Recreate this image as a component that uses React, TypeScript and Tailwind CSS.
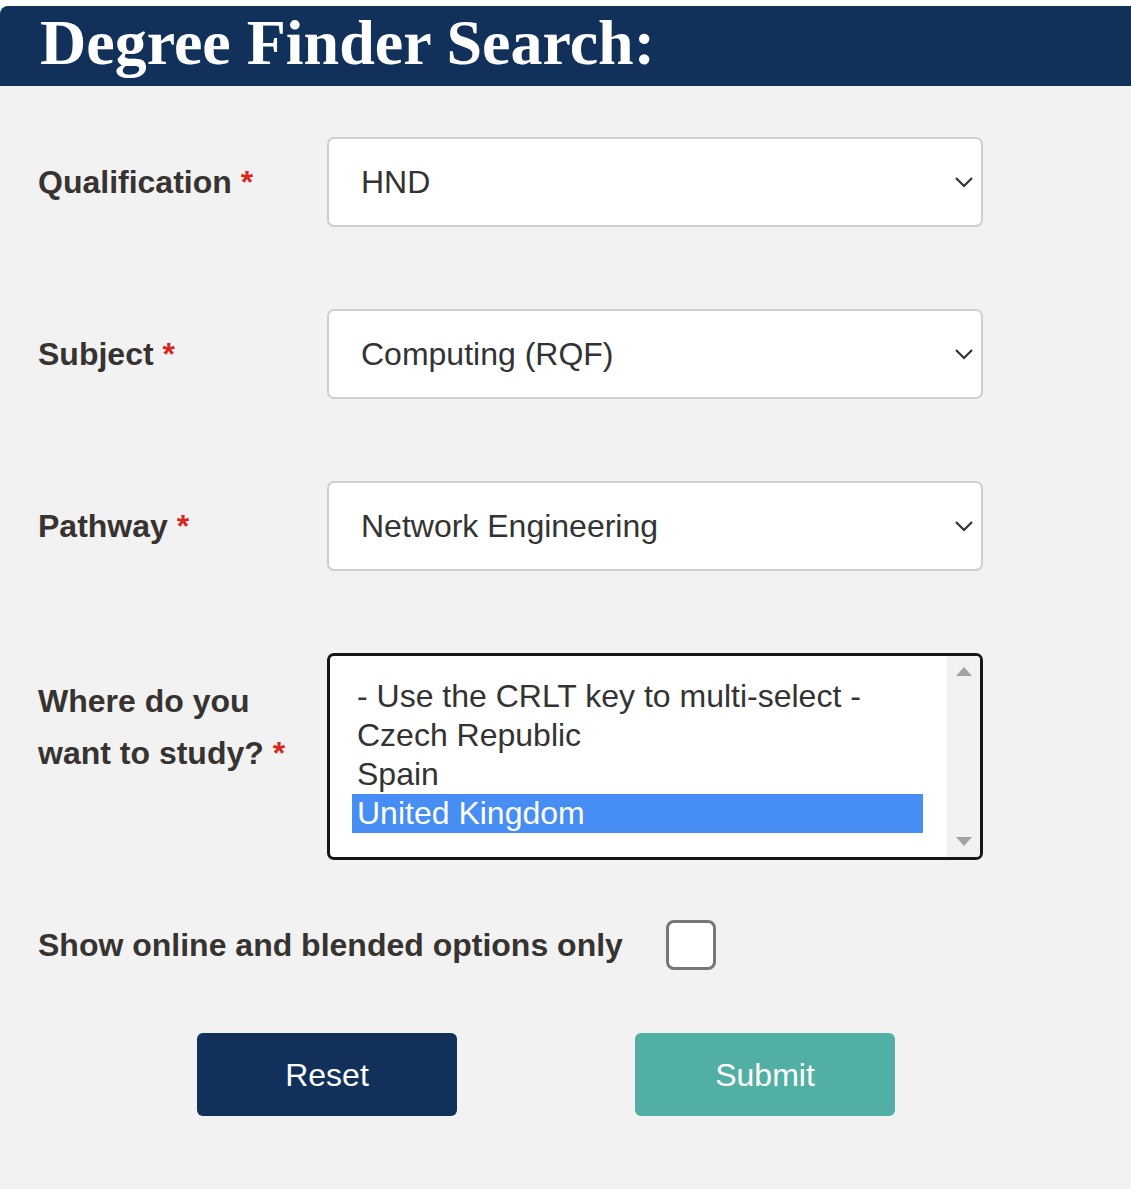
import React from "react";

const sans = { fontFamily: '"Liberation Sans", Arial, sans-serif' };

function Label({ text }: { text: React.ReactNode }) {
  return (
    <div className="w-[289px] shrink-0 text-[32px] font-bold leading-[52px] text-[#363330]">
      {text} <span className="text-[#d8281e]">*</span>
    </div>
  );
}

function Chevron() {
  return (
    <svg width="20" height="12" viewBox="0 0 20 12" className="absolute right-[7px] top-1/2 -translate-y-1/2">
      <path d="M2 2 L10 10 L18 2" fill="none" stroke="#333" strokeWidth="2.2" />
    </svg>
  );
}

function SelectBox({ value }: { value: string }) {
  return (
    <div className="relative flex h-[90px] w-[656px] items-center rounded-[7px] border-2 border-[#cfcfcf] bg-white pl-[32px] text-[32px] text-[#333]">
      {value}
      <Chevron />
    </div>
  );
}

const countries = ["- Use the CRLT key to multi-select -", "Czech Republic", "Spain", "United Kingdom"];

function ListBox() {
  return (
    <div className="relative h-[207px] w-[656px] overflow-hidden rounded-[7px] border-[3px] border-[#161616] bg-white">
      <div className="pl-[22px] pr-[57px] pt-[21px] text-[32px] leading-[39px] text-[#333]">
        {countries.map((c) => (
          <div
            key={c}
            className={c === "United Kingdom" ? "bg-[#468df4] pl-[5px] text-white" : "pl-[5px]"}
          >
            {c}
          </div>
        ))}
      </div>
      <div className="absolute bottom-0 right-0 top-0 flex w-[33px] flex-col items-center justify-between bg-[#f1f1f1] py-[10px]">
        <svg width="16" height="10" viewBox="0 0 16 10">
          <path d="M0 10 L8 1 L16 10 Z" fill="#a3a3a3" />
        </svg>
        <svg width="16" height="10" viewBox="0 0 16 10">
          <path d="M0 0 L8 9 L16 0 Z" fill="#a3a3a3" />
        </svg>
      </div>
    </div>
  );
}

export default function App() {
  return (
    <div className="h-[1189px] w-[1131px] bg-white pt-[6px]" style={sans}>
      <div className="flex h-[80px] items-start rounded-tl-[8px] bg-[#11305a] pl-[40px]">
        <h1
          className="text-[64px] font-bold leading-[74px] text-white"
          style={{ fontFamily: '"Liberation Serif", "Times New Roman", serif' }}
        >
          Degree Finder Search:
        </h1>
      </div>
      <div className="h-[1103px] bg-[#f2f2f2] pl-[38px] pt-[51px]">
        <div className="flex flex-col gap-[82px]">
          <div className="flex items-center">
            <Label text="Qualification" />
            <SelectBox value="HND" />
          </div>
          <div className="flex items-center">
            <Label text="Subject" />
            <SelectBox value="Computing (RQF)" />
          </div>
          <div className="flex items-center">
            <Label text="Pathway" />
            <SelectBox value="Network Engineering" />
          </div>
          <div className="flex items-start">
            <div className="pt-[22px]">
              <Label
                text={
                  <>
                    Where do you
                    <br />
                    want to study?
                  </>
                }
              />
            </div>
            <ListBox />
          </div>
        </div>
        <div className="mt-[60px] flex h-[50px] items-center">
          <span className="text-[32px] font-bold text-[#363330]">Show online and blended options only</span>
          <div className="ml-[43px] h-[50px] w-[50px] rounded-[8px] border-[3px] border-[#777] bg-white" />
        </div>
        <div className="ml-[159px] mt-[63px] flex gap-[178px]">
          <button className="h-[83px] w-[260px] rounded-[6px] bg-[#11305a] text-[32px] text-white">Reset</button>
          <button className="h-[83px] w-[260px] rounded-[6px] bg-[#52afa4] text-[32px] text-white">Submit</button>
        </div>
      </div>
    </div>
  );
}
